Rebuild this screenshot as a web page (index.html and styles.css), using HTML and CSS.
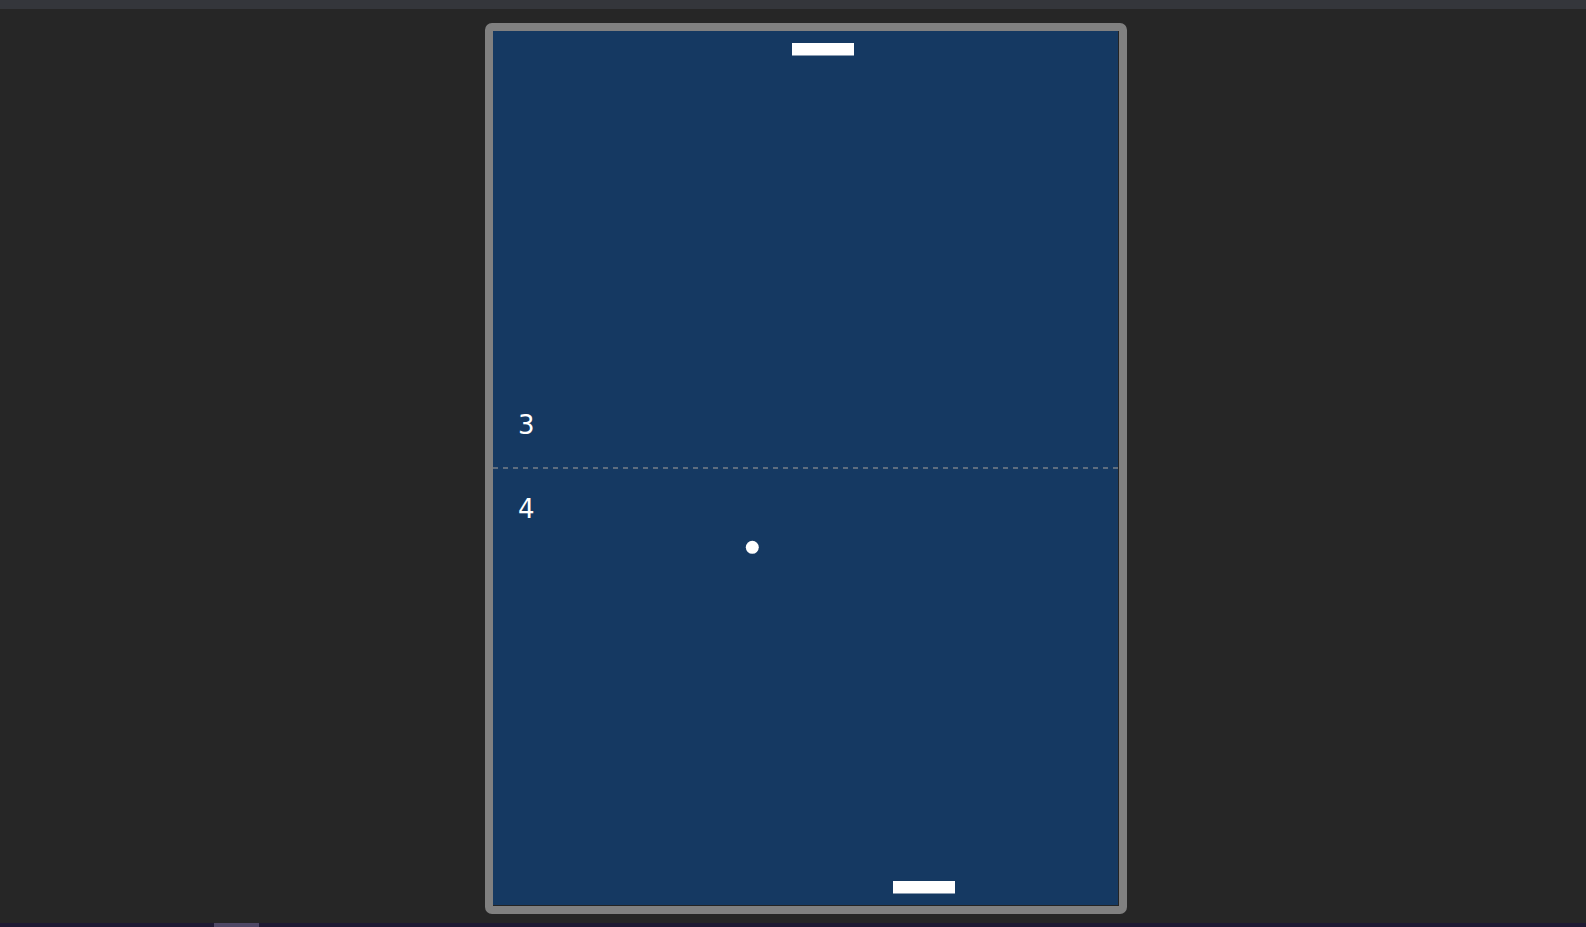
FILE: index.html
```html
<!DOCTYPE html>
<html>
<head>
<meta charset="utf-8">
<title>Pong</title>
<link rel="stylesheet" href="styles.css">
</head>
<body>
<div class="topbar"></div>
<main class="stage">
  <div class="board">
    <svg class="court" width="625" height="874" viewBox="0 0 625 874">
      <rect x="0" y="0" width="625" height="874" fill="#153962"/>
      <line x1="0" y1="437" x2="625" y2="437" stroke="#5e6d7f" stroke-width="2" stroke-dasharray="5 5"/>
      <rect x="299" y="12" width="62" height="12.5" fill="#ffffff"/>
      <rect x="400" y="850" width="62" height="12.5" fill="#ffffff"/>
      <circle cx="259.3" cy="516.3" r="6.5" fill="#ffffff"/>
      <text class="score" x="25" y="403">3</text>
      <text class="score" x="25" y="487">4</text>
    </svg>
  </div>
</main>
<div class="bottombar"><div class="thumb"></div></div>
</body>
</html>
```
FILE: styles.css
```css
html, body {
  margin: 0;
  padding: 0;
  height: 100%;
  overflow: hidden;
}
body {
  background: #262626;
  display: flex;
  flex-direction: column;
  font-family: "DejaVu Sans", sans-serif;
}
.topbar {
  height: 9px;
  background: #34363b;
  flex: none;
}
.stage {
  flex: 1;
  display: flex;
  justify-content: center;
  align-items: flex-start;
  padding: 14px 0 0 26px;
}
.board {
  border: 8px solid #808080;
  border-radius: 7px;
  background: #242424;
  width: 626px;
  height: 875px;
  box-sizing: content-box;
}
.court {
  display: block;
}
.score {
  fill: #ffffff;
  font-family: "DejaVu Sans", sans-serif;
  font-size: 26px;
}
.bottombar {
  height: 4px;
  background: #1e1a33;
  flex: none;
  position: relative;
}
.thumb {
  position: absolute;
  left: 214px;
  top: 0;
  width: 45px;
  height: 4px;
  background: #4f4866;
}
```
